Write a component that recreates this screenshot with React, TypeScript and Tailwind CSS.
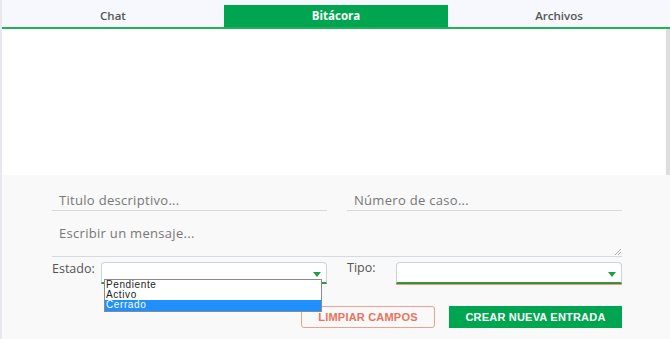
import React from "react";

const tabs = ["Chat", "Bitácora", "Archivos"];

function Arrow() {
  return (
    <svg width="8" height="5" viewBox="0 0 8 5" className="absolute right-[5px] top-[9px]">
      <path d="M0 0 L8 0 L4 5 Z" fill="#1f9d3f" />
    </svg>
  );
}

export default function App() {
  return (
    <div
      className="w-[670px] h-[339px] flex flex-col bg-white border-l-2 border-[#e6e9f0] overflow-hidden"
      style={{ fontFamily: "'Open Sans', Lato, sans-serif" }}
    >
      {/* tabs */}
      <div className="h-[29px] pt-[5px] bg-[#f6f8fe] border-b-2 border-[#1fb25a] flex">
        {tabs.map((t) => (
          <div
            key={t}
            className={
              t === "Bitácora"
                ? "w-[224px] flex items-center justify-center bg-[#00a54f] text-white text-[11.5px] font-bold"
                : "flex-1 flex items-center justify-center text-[#555] text-[11.5px] font-semibold"
            }
          >
            {t}
          </div>
        ))}
      </div>

      {/* message area */}
      <div className="h-[146px] flex justify-end bg-white">
        <div className="w-[4px] bg-[#dedede]" />
      </div>

      {/* form */}
      <div className="flex-1 bg-[#f9f9f9] pl-[50px] pr-[48px] pt-[15px] flex flex-col">
        <div className="flex gap-[20px]">
          <div className="flex-1 h-[21px] border-b border-[#d5d9e0] px-[7px] text-[13px] tracking-[0.3px] text-[#777] leading-[21px]">
            Titulo descriptivo...
          </div>
          <div className="flex-1 h-[21px] border-b border-[#d5d9e0] px-[7px] text-[13px] tracking-[0.3px] text-[#777] leading-[21px]">
            Número de caso...
          </div>
        </div>

        <div className="relative mt-[9px] h-[37px] border-b border-[#d5d9e0] px-[7px] pt-[4px] text-[13px] tracking-[0.3px] text-[#777]">
          Escribir un mensaje...
          <svg width="7" height="7" viewBox="0 0 7 7" className="absolute right-[1px] bottom-[1px]">
            <path d="M1 7 L7 1 M4 7 L7 4" stroke="#999" strokeWidth="0.8" />
          </svg>
        </div>

        <div className="flex gap-[20px] mt-[5px]">
          <div className="flex-1 flex">
            <div className="w-[49px] text-[12.5px] leading-[14px] text-[#555]">Estado:</div>
            <div className="relative flex-1 h-[22px] bg-white border border-[#ccd3dc] border-b-2 border-b-[#2e9a3e] rounded-t-[4px]">
              <Arrow />
              <div
                className="absolute left-[2px] top-[16px] w-[218px] bg-white border border-[#8a8a8a] text-[10px] leading-[10px] tracking-[0.6px] text-[#222] z-10"
                style={{ fontFamily: "'Liberation Sans', Arial, sans-serif" }}
              >
                <div className="h-[10px] pl-[1px]">Pendiente</div>
                <div className="h-[10px] pl-[1px]">Activo</div>
                <div className="h-[11px] pl-[1px] bg-[#1e90ff] text-white">Cerrado</div>
              </div>
            </div>
          </div>
          <div className="flex-1 flex">
            <div className="w-[49px] text-[12.5px] leading-[12px] text-[#555]">Tipo:</div>
            <div className="relative flex-1 h-[22px] bg-white border border-[#ccd3dc] border-b-2 border-b-[#3f8f3a] rounded-t-[4px] shadow-[0_1px_0_#d9a08a]">
              <Arrow />
            </div>
          </div>
        </div>

        <div
          className="flex justify-end gap-[14px] mt-[22px]"
          style={{ fontFamily: "'Liberation Sans', Arial, sans-serif" }}
        >
          <div className="w-[134px] h-[22px] flex items-center justify-center border border-[#f0a090] rounded-[3px] text-[#e8735e] text-[11px] font-bold tracking-[0.2px]">
            LIMPIAR CAMPOS
          </div>
          <div className="w-[173px] h-[22px] flex items-center justify-center bg-[#00a54f] text-white text-[11px] font-bold tracking-[0.2px]">
            CREAR NUEVA ENTRADA
          </div>
        </div>
      </div>
    </div>
  );
}
